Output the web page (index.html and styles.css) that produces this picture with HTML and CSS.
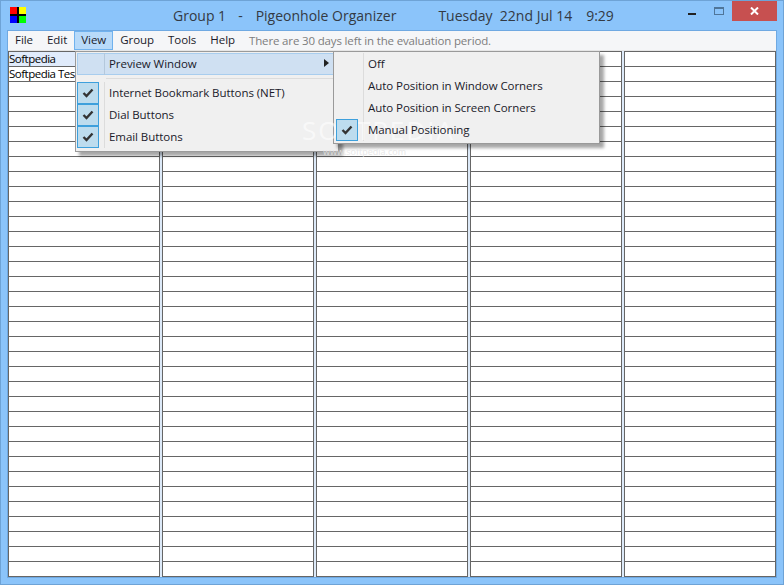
FILE: index.html
```html
<!DOCTYPE html>
<html lang="en">
<head>
<meta charset="utf-8">
<title>Pigeonhole Organizer</title>
<link rel="stylesheet" href="styles.css">
</head>
<body>
<div class="window">
  <header class="titlebar">
    <svg class="app-icon" width="16" height="16" viewBox="0 0 16 16"><rect width="8" height="8" fill="#ff0000"/><rect x="8" width="8" height="8" fill="#ffff00"/><rect y="8" width="8" height="8" fill="#0000ff"/><rect x="8" y="8" width="8" height="8" fill="#00ff00"/><rect x="7" width="2" height="16" fill="#000"/><rect y="7" width="16" height="2" fill="#000"/></svg>
    <span class="title-group">Group 1</span>
    <span class="title-dash">-</span>
    <span class="title-app">Pigeonhole Organizer</span>
    <span class="title-date">Tuesday&nbsp; 22nd Jul 14</span>
    <span class="title-time">9:29</span>
    <div class="caption-buttons">
      <span class="cap-min"></span>
      <span class="cap-max"></span>
      <span class="cap-close"><svg width="9" height="8" viewBox="0 0 9 8"><path d="M1 0.5L8 7.5M8 0.5L1 7.5" stroke="#fff" stroke-width="2" fill="none"/></svg></span>
    </div>
  </header>
  <div class="client">
    <nav class="menubar">
      <span class="menu-title">File</span>
      <span class="menu-title">Edit</span>
      <span class="menu-title active">View</span>
      <span class="menu-title">Group</span>
      <span class="menu-title">Tools</span>
      <span class="menu-title">Help</span>
      <span class="menu-note">There are 30 days left in the evaluation period.</span>
    </nav>
    <main class="board">
      <section class="col">
        <div class="cell selected">Softpedia</div><div class="cell">Softpedia Test</div>
        <div class="cell"></div><div class="cell"></div><div class="cell"></div><div class="cell"></div><div class="cell"></div><div class="cell"></div><div class="cell"></div><div class="cell"></div><div class="cell"></div><div class="cell"></div><div class="cell"></div><div class="cell"></div><div class="cell"></div><div class="cell"></div><div class="cell"></div><div class="cell"></div><div class="cell"></div><div class="cell"></div><div class="cell"></div><div class="cell"></div><div class="cell"></div><div class="cell"></div><div class="cell"></div><div class="cell"></div><div class="cell"></div><div class="cell"></div><div class="cell"></div><div class="cell"></div><div class="cell"></div><div class="cell"></div><div class="cell"></div><div class="cell"></div><div class="cell"></div>
      </section>
      <section class="col">
        <div class="cell"></div><div class="cell"></div><div class="cell"></div><div class="cell"></div><div class="cell"></div><div class="cell"></div><div class="cell"></div><div class="cell"></div><div class="cell"></div><div class="cell"></div><div class="cell"></div><div class="cell"></div><div class="cell"></div><div class="cell"></div><div class="cell"></div><div class="cell"></div><div class="cell"></div><div class="cell"></div><div class="cell"></div><div class="cell"></div><div class="cell"></div><div class="cell"></div><div class="cell"></div><div class="cell"></div><div class="cell"></div><div class="cell"></div><div class="cell"></div><div class="cell"></div><div class="cell"></div><div class="cell"></div><div class="cell"></div><div class="cell"></div><div class="cell"></div><div class="cell"></div><div class="cell"></div>
      </section>
      <section class="col">
        <div class="cell"></div><div class="cell"></div><div class="cell"></div><div class="cell"></div><div class="cell"></div><div class="cell"></div><div class="cell"></div><div class="cell"></div><div class="cell"></div><div class="cell"></div><div class="cell"></div><div class="cell"></div><div class="cell"></div><div class="cell"></div><div class="cell"></div><div class="cell"></div><div class="cell"></div><div class="cell"></div><div class="cell"></div><div class="cell"></div><div class="cell"></div><div class="cell"></div><div class="cell"></div><div class="cell"></div><div class="cell"></div><div class="cell"></div><div class="cell"></div><div class="cell"></div><div class="cell"></div><div class="cell"></div><div class="cell"></div><div class="cell"></div><div class="cell"></div><div class="cell"></div><div class="cell"></div>
      </section>
      <section class="col">
        <div class="cell"></div><div class="cell"></div><div class="cell"></div><div class="cell"></div><div class="cell"></div><div class="cell"></div><div class="cell"></div><div class="cell"></div><div class="cell"></div><div class="cell"></div><div class="cell"></div><div class="cell"></div><div class="cell"></div><div class="cell"></div><div class="cell"></div><div class="cell"></div><div class="cell"></div><div class="cell"></div><div class="cell"></div><div class="cell"></div><div class="cell"></div><div class="cell"></div><div class="cell"></div><div class="cell"></div><div class="cell"></div><div class="cell"></div><div class="cell"></div><div class="cell"></div><div class="cell"></div><div class="cell"></div><div class="cell"></div><div class="cell"></div><div class="cell"></div><div class="cell"></div><div class="cell"></div>
      </section>
      <section class="col">
        <div class="cell"></div><div class="cell"></div><div class="cell"></div><div class="cell"></div><div class="cell"></div><div class="cell"></div><div class="cell"></div><div class="cell"></div><div class="cell"></div><div class="cell"></div><div class="cell"></div><div class="cell"></div><div class="cell"></div><div class="cell"></div><div class="cell"></div><div class="cell"></div><div class="cell"></div><div class="cell"></div><div class="cell"></div><div class="cell"></div><div class="cell"></div><div class="cell"></div><div class="cell"></div><div class="cell"></div><div class="cell"></div><div class="cell"></div><div class="cell"></div><div class="cell"></div><div class="cell"></div><div class="cell"></div><div class="cell"></div><div class="cell"></div><div class="cell"></div><div class="cell"></div><div class="cell"></div>
      </section>
    </main>
  </div>

  <div class="menu menu-view">
    <div class="item highlighted">
      <span class="gutter"></span><span class="label">Preview Window</span>
      <svg class="arrow" width="5" height="8" viewBox="0 0 5 8"><path d="M0 0L5 4L0 8Z" fill="#222"/></svg>
    </div>
    <div class="separator"></div>
    <div class="item"><span class="gutter"><span class="check"><svg width="12" height="10" viewBox="0 0 12 10"><path d="M1.5 5L4.5 8L10.5 1.5" stroke="#333" stroke-width="2.4" fill="none"/></svg></span></span><span class="label">Internet Bookmark Buttons (NET)</span></div>
    <div class="item"><span class="gutter"><span class="check"><svg width="12" height="10" viewBox="0 0 12 10"><path d="M1.5 5L4.5 8L10.5 1.5" stroke="#333" stroke-width="2.4" fill="none"/></svg></span></span><span class="label">Dial Buttons</span></div>
    <div class="item"><span class="gutter"><span class="check"><svg width="12" height="10" viewBox="0 0 12 10"><path d="M1.5 5L4.5 8L10.5 1.5" stroke="#333" stroke-width="2.4" fill="none"/></svg></span></span><span class="label">Email Buttons</span></div>
  </div>

  <div class="menu menu-preview">
    <div class="item"><span class="gutter wide"></span><span class="label">Off</span></div>
    <div class="item"><span class="gutter wide"></span><span class="label">Auto Position in Window Corners</span></div>
    <div class="item"><span class="gutter wide"></span><span class="label">Auto Position in Screen Corners</span></div>
    <div class="item"><span class="gutter wide"><span class="check"><svg width="12" height="10" viewBox="0 0 12 10"><path d="M1.5 5L4.5 8L10.5 1.5" stroke="#333" stroke-width="2.4" fill="none"/></svg></span></span><span class="label">Manual Positioning</span></div>
  </div>

  <div class="watermark">SOFTPEDIA</div>
  <div class="watermark-url">www.softpedia.com</div>
</div>
</body>
</html>
```

FILE: styles.css
```css
* { box-sizing: border-box; }
html, body { margin: 0; padding: 0; }
body {
  width: 784px;
  height: 585px;
  overflow: hidden;
  font-family: "Open Sans", "Noto Sans", sans-serif;
  font-size: 11.5px;
  color: #1a1a2a;
}
.window {
  position: relative;
  width: 784px;
  height: 585px;
  background: #8bc4fa;
  border: 1px solid #6ea3d6;
  overflow: hidden;
}
.titlebar {
  height: 29px;
  display: flex;
  align-items: center;
  font-size: 14px;
  color: #333a44;
  position: relative;
}
.app-icon { margin: -1px 0 0 9px; flex: none; }
.title-group { margin-left: 147px; }
.title-dash { margin-left: 12px; }
.title-app { margin-left: 13px; }
.title-date { margin-left: 42px; white-space: pre; }
.title-time { margin-left: 14px; }
.caption-buttons {
  margin-left: auto;
  align-self: flex-start;
  display: flex;
  align-items: flex-start;
  margin-right: 6px;
}
.cap-min {
  width: 8px; height: 2px; background: #222;
  margin-top: 12px;
}
.cap-max {
  width: 10px; height: 8px;
  border: 1px solid #4f7599; border-top-width: 2px;
  margin: 6px 8px 0 18px;
}
.cap-close {
  width: 45px; height: 20px;
  background: #c75050;
  display: flex; align-items: center; justify-content: center;
}
.client {
  margin: 0 6px;
  border: 1px solid #6fa9e2;
  background: #dce9f8;
}
.menubar {
  height: 20px;
  background: #f5f6f8;
  box-shadow: inset 0 -1px 0 #e6e6e6;
  display: flex;
  align-items: center;
  white-space: nowrap;
}
.menu-title {
  height: 19px;
  line-height: 18px;
  padding: 0 7px;
  letter-spacing: -0.05px;
  color: #1a1a2a;
  align-self: flex-start;
}
.menu-title.active {
  background: #b8daf9;
  box-shadow: inset 0 0 0 1px #70b2ee;
}
.menu-note { padding-left: 7px; color: #7d7d7d; letter-spacing: -0.15px; margin-top: -2px; }
.board {
  display: flex;
  gap: 2px;
  background: #dce9f8;
}
.col {
  width: 152px;
  height: 526px;
  background: #fff;
  border: 1px solid #666;
  border-bottom: 0;
  overflow: hidden;
}
.cell {
  height: 15px;
  border-bottom: 1px solid #666;
  line-height: 13px;
  white-space: nowrap;
  letter-spacing: -0.5px;
  color: #000;
  overflow: hidden;
}
.cell.selected { background: #e0ebfb; }

.menu {
  position: absolute;
  background: #f0f0f0;
  border: 1px solid #9a9a9a;
  box-shadow: 4px 4px 3px rgba(0, 0, 0, 0.35);
  padding: 1px 0 0 1px;
}
.menu-view { left: 74px; top: 50px; width: 264px; height: 101px; }
.menu-preview { left: 332px; top: 50px; width: 267px; height: 93px; }
.item {
  height: 22px;
  display: flex;
  align-items: center;
  position: relative;
  color: #1a1a2a;
}
.item.highlighted {
  background: #cfe0f2;
  box-shadow: inset 0 0 0 1px #a8cdee;
  margin-right: 4px;
}
.gutter {
  width: 28px;
  height: 100%;
  flex: none;
  border-right: 1px solid #dcdcdc;
  display: block;
  margin-right: 4px;
}
.gutter.wide { width: 29px; }
.highlighted .gutter { border-right-color: #b4c8dc; }
.check {
  width: 22px; height: 22px;
  background: #bddcee;
  border: 1px solid #3ea0dc;
  display: flex; align-items: center; justify-content: center;
  position: relative;
  z-index: 2;
}
.menu-preview .check { margin-left: 1px; }
.label {
  white-space: nowrap;
  margin-top: -2px;
  letter-spacing: -0.06px;
  position: relative;
  z-index: 2;
}
.arrow { position: absolute; right: 5px; top: 6px; }
.separator {
  height: 7px;
  margin: 0 4px 0 29px;
  background: linear-gradient(#dcdcdc, #dcdcdc) center / 100% 1px no-repeat;
}
.watermark {
  position: absolute;
  z-index: 1;
  left: 301px; top: 111px;
  font-size: 26px;
  letter-spacing: 2px;
  color: rgba(255, 255, 255, 0.6);
  pointer-events: none;
}
.watermark-url {
  position: absolute;
  z-index: 1;
  left: 322px; top: 144px;
  font-size: 9px;
  color: rgba(228, 228, 228, 0.9);
  pointer-events: none;
}
```
